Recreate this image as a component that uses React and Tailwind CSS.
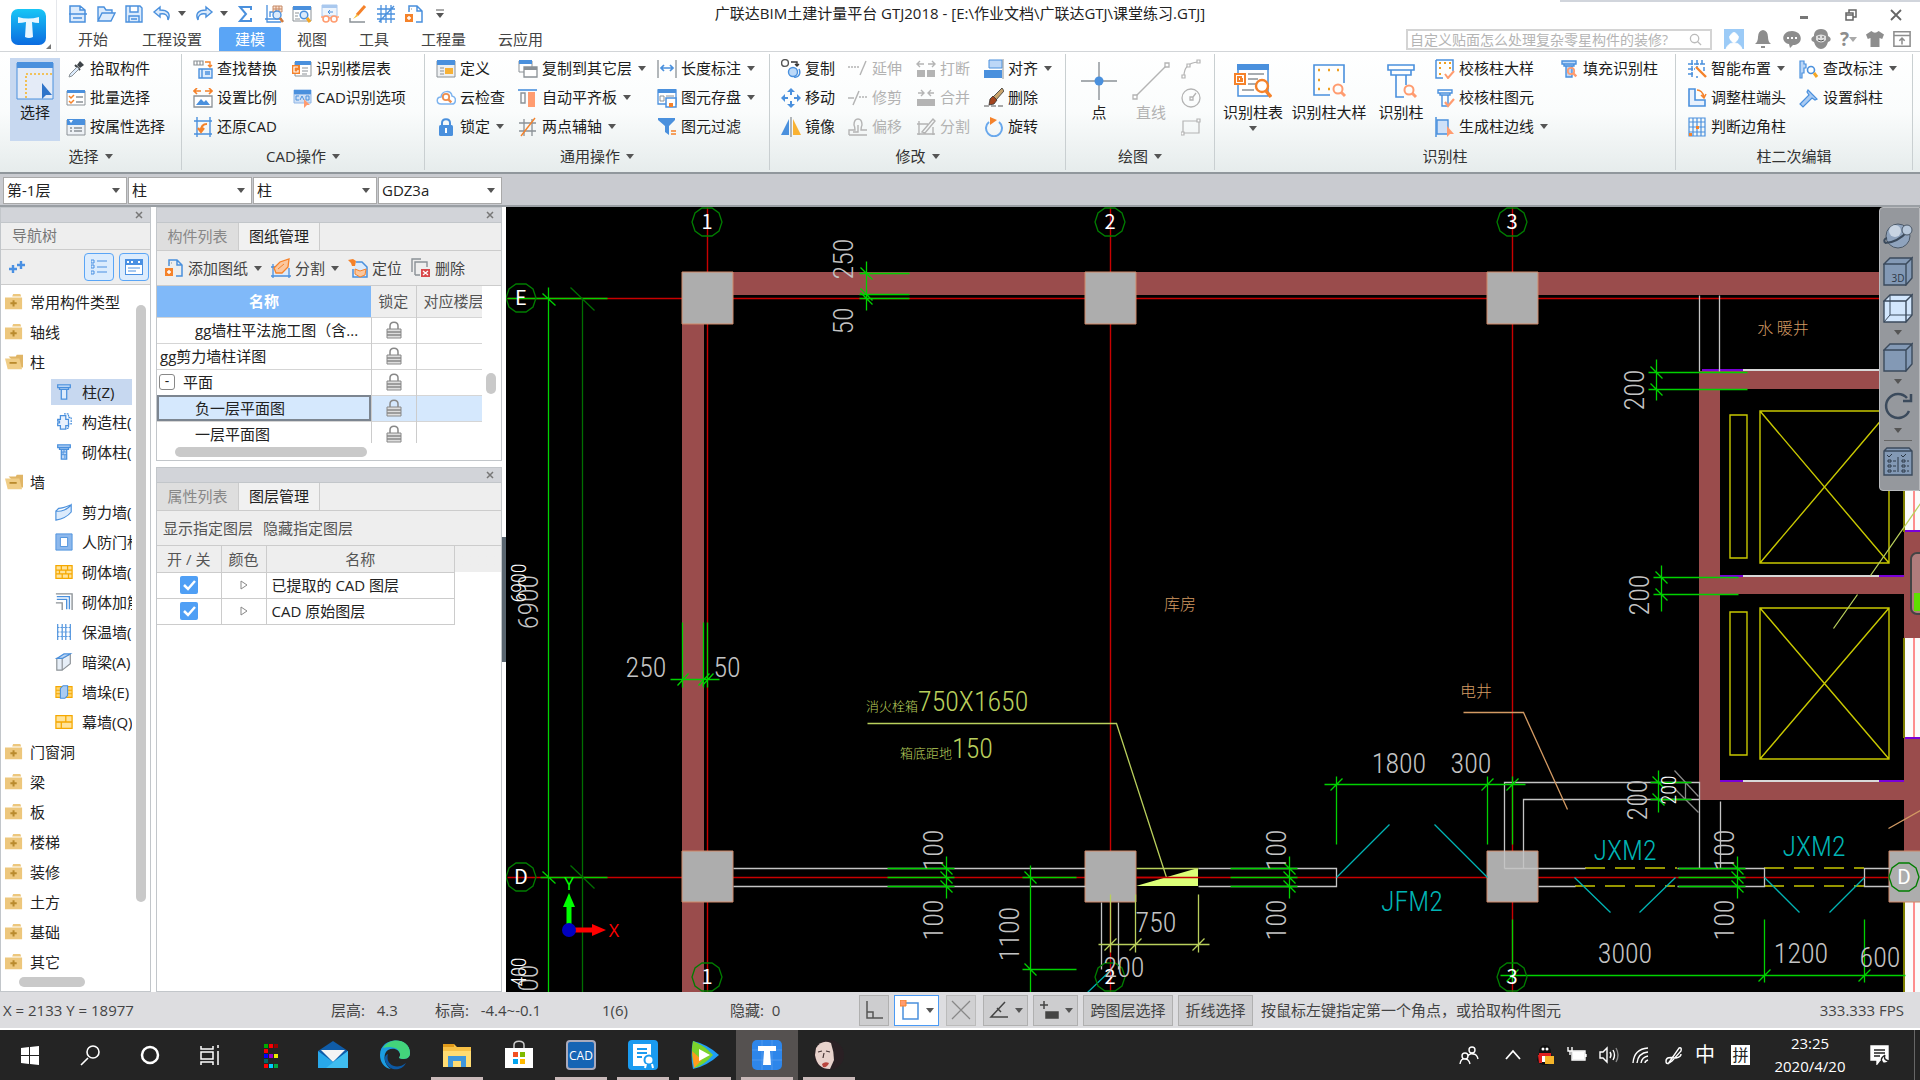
import React from 'react';

const B = '#4a90dd';
const O = '#f5822a';
const G = '#8b9196';
const L = '#b4b4b4';
const S = '#ff9c70';

/* ---------- icons, all on a 20x20 grid ---------- */

const columnShape = (c, fill) => (
  <path d="M3 2h14v3h-2v2h-2v11H7V7H5V5H3zM5 5h10M7 7h6" fill={fill || 'none'} stroke={c} strokeWidth="1.4" />
);
const lens = (x, y, c = S) => (
  <g fill="none" stroke={c} strokeWidth="1.8">
    <circle cx={x} cy={y} r="3.2" />
    <path d={`M${x + 2.3} ${y + 2.3}l3 3`} strokeWidth="2.4" />
  </g>
);

const icons = {
  newFile: <path d="M2 9V2h10l5 4v12H2zM12 2v4h5M1 10h18M5 14h9" fill="#dcebfc" stroke={B} strokeWidth="1.5" />,
  open: <path d="M2 17V3h6l2 3h6v3M2 17L6 9h13l-4 8z" fill="#dcebfc" stroke={B} strokeWidth="1.4" />,
  save: <path d="M2 2h14l2 2v14H2zM6 2v6h8V2M5 18v-6h10v6M7 15h6" fill="#dcebfc" stroke={B} strokeWidth="1.4" />,
  undo: <path d="M8 3L2 8l6 5v-3c5-1 8 1 8 6 3-6 0-10-8-10z" fill="#dcebfc" stroke={B} strokeWidth="1.4" />,
  redo: <path d="M12 3l6 5-6 5v-3c-5-1-8 1-8 6-3-6 0-10 8-10z" fill="#dcebfc" stroke={B} strokeWidth="1.4" />,
  sum: <path d="M15 6V3H4l6 7-6 7h11v-3" fill="none" stroke={B} strokeWidth="2" />,
  report: (
    <g fill="none">
      <path d="M3 1v17h14M6 13V8h4M1 15h17" stroke={B} strokeWidth="1.3" />
      <path d="M9 2h9v6H9zM12 2v6M15 2v6M9 5h9" fill="#fde2d0" stroke="#c68a67" />
      <circle cx="13" cy="11" r="4" fill="#dcebfc" stroke={B} strokeWidth="1.4" />
      <path d="M16 14l3 4" stroke="#d07a3d" strokeWidth="2.6" />
    </g>
  ),
  viewDoc: (
    <g fill="none">
      <path d="M1 3h18v14H1z" fill="#fff" stroke={G} />
      <path d="M1 2h18v4H1z" fill={B} />
      <path d="M3 9h4M3 12h3M3 15h5" stroke={G} />
      <circle cx="12" cy="11" r="3.8" fill="#dcebfc" stroke={B} strokeWidth="1.5" />
      <path d="M15 14l3 4" stroke="#f5a623" strokeWidth="3" />
    </g>
  ),
  cloudDoc: (
    <g fill="none">
      <path d="M2 1h15v11H2z" fill="#eef5fd" stroke="#a9c8ee" />
      <path d="M2 1h15v3H2z" fill="#a9c8ee" />
      <path d="M13 8H8m2-2L8 8l2 2" stroke={B} />
      <circle cx="6" cy="15" r="3" stroke={S} strokeWidth="1.6" />
      <circle cx="14" cy="15" r="3" stroke={S} strokeWidth="1.6" />
      <path d="M2 14v-2M18 14v-2M9 14h2" stroke={S} strokeWidth="1.4" />
    </g>
  ),
  brush: (
    <g fill="none">
      <path d="M17 2L9 11" stroke={O} strokeWidth="3" />
      <path d="M9 10l-4 5 5-3z" fill="#f5c23a" />
      <path d="M2 14v4h15" stroke={G} strokeWidth="1.4" />
    </g>
  ),
  gridTool: <path d="M5 1v18M10 1v18M15 1v18M1 5h18M1 10h18M1 15h18M3 18L18 2" fill="none" stroke={B} strokeWidth="1.3" />,
  addFile: (
    <g fill="none">
      <path d="M5 8V2h8l5 5v11h-6M13 2v5h5" stroke={B} strokeWidth="1.5" />
      <path d="M5 5h3" stroke={G} strokeDasharray="1 1" />
      <path d="M1 10h8v8H1z" fill={O} />
      <path d="M5 12v4M3 14h4" stroke="#fff" strokeWidth="1.4" />
    </g>
  ),
  dropper: (
    <g fill="none">
      <path d="M14 2l4 4-4 3-3-3z" fill="#3d4347" />
      <path d="M9 6l5 5" stroke="#3d4347" strokeWidth="2" />
      <path d="M11 8l-7 7-1 3 3-1 7-7z" fill="#dcebfc" stroke={G} />
    </g>
  ),
  batch: (
    <g fill="none">
      <path d="M1 3h18v14H1z" fill="#fff" stroke={G} />
      <path d="M1 2h18v3H1z" fill={B} />
      <path d="M3 8l2 2 3-3M3 13l2 2 3-3" stroke={O} strokeWidth="1.5" />
      <path d="M10 9h7M10 14h7" stroke={G} strokeWidth="1.4" />
    </g>
  ),
  byProp: (
    <g fill="none">
      <path d="M1 3h18v15H1z" fill="#eef2f6" stroke={G} />
      <path d="M1 2h18v6H1z" fill={B} />
      <path d="M3 3h4L5 6z" fill="#fff" />
      <path d="M4 11h2M4 14h2M8 11h8M8 14h8" stroke={G} strokeWidth="1.3" />
    </g>
  ),
  findReplace: (
    <g fill="none">
      <path d="M1 2h9v4H1zM4 2v4M7 2v4" stroke={G} strokeWidth="1.2" />
      <path d="M12 3h5v5m-2-2l2 2 2-2" stroke={O} strokeWidth="1.4" />
      <path d="M6 10h13v9H6zM9 10v9M12 13h5M12 15h5" fill="#dcebfc" stroke={B} strokeWidth="1.4" />
    </g>
  ),
  scale: (
    <g fill="none">
      <path d="M1 3h7M12 3h7M4 0L1 3l3 3M16 0l3 3-3 3" stroke={O} strokeWidth="1.6" />
      <path d="M1 8h18v11H1z" fill="#fff" stroke={G} strokeWidth="1.3" />
      <path d="M3 17l5-6 3 3 2-2 4 5z" fill={B} />
    </g>
  ),
  restore: (
    <g fill="none">
      <path d="M4 0v20M1 4h18M17 0v20M1 17h18" stroke={B} strokeWidth="1.4" />
      <path d="M14 7c-5 0-6 3-6 7m-3-3l3 4 3-4" stroke={O} strokeWidth="2.2" />
    </g>
  ),
  floorTable: (
    <g fill="none">
      <path d="M3 3h16v14H3z" fill="#fff" stroke={G} />
      <path d="M3 2h16v4H3z" fill={B} />
      <path d="M10 9h6M10 12h6M10 15h5" stroke={G} />
      <path d="M0 6h8v9H0z" fill={O} />
      <path d="M6 8H2v5h4v-2" stroke="#fff" strokeWidth="1.2" />
    </g>
  ),
  cadOption: (
    <g fill="none">
      <path d="M2 2h17v4H2zM2 6h17v9H2z" fill="#cfe0f5" stroke="#8fb6e6" />
      <path d="M2 2h17v4H2z" fill={B} />
      <path d="M7 8H4v4h3M8 12l2-4 2 4M14 8v4h3V8z" stroke={B} />
      <path d="M12 11l6 6-3 0-3 3z" fill={S} />
    </g>
  ),
  define: (
    <g fill="none">
      <path d="M1 2h18v16H1z" fill="#eef0f2" stroke={G} />
      <path d="M1 1h18v5H1z" fill={B} />
      <path d="M4 9h4M4 12h4M4 15h4" stroke={G} />
      <path d="M9 9h8v6H9z" fill="#f7b136" />
    </g>
  ),
  cloud: (
    <g fill="none">
      <path d="M5 16C0 16 0 9 5 9c1-7 10-7 11-1 5 1 4 8 0 8z" fill="#fff" stroke="#7db3ee" strokeWidth="1.5" />
      {lens(10, 9, '#ef8e4d')}
    </g>
  ),
  lock: (
    <g fill="none">
      <path d="M6 9V6c0-5 8-5 8 0v3" stroke={B} strokeWidth="2" />
      <rect x="3" y="8" width="14" height="11" rx="1.5" fill={B} />
      <path d="M10 11v5" stroke="#fff" strokeWidth="2" />
    </g>
  ),
  copyLayer: (
    <g fill="none">
      <path d="M1 2h13v11H1z" fill="#fff" stroke={G} />
      <path d="M1 1h13v4H1z" fill={B} />
      <path d="M6 8h13v10H6z" fill="#fff" stroke={G} strokeWidth="1.3" />
      <path d="M6 8h13v3H6z" fill={G} />
    </g>
  ),
  alignBoard: (
    <g fill="none">
      <path d="M0 2h19" stroke={B} strokeWidth="1.6" />
      <path d="M3 5h4v10H3z" stroke={G} strokeWidth="1.4" />
      <path d="M10 4h7v15h-7z" fill={S} />
    </g>
  ),
  auxAxis: (
    <g fill="none">
      <path d="M6 2v17M14 2v17M1 6h17M1 14h17" stroke={G} strokeWidth="1.3" />
      <path d="M3 19L17 1" stroke={O} strokeWidth="1.4" />
    </g>
  ),
  lengthDim: (
    <g fill="none">
      <path d="M1 1v18M19 1v18" stroke={G} strokeWidth="1.3" />
      <path d="M4 9h12M7 6L4 9l3 3M13 6l3 3-3 3" stroke={B} strokeWidth="1.7" />
    </g>
  ),
  saveElem: (
    <g fill="none">
      <path d="M1 2h18v14H1z" fill="#fff" stroke={B} strokeWidth="1.3" />
      <path d="M1 1h18v4H1z" fill={B} />
      <path d="M3 8h4v5H3zM9 8h8" stroke={G} />
      <path d="M9 10h10v9H9z" fill="#fff" stroke={B} strokeWidth="1.5" />
      <path d="M12 15h4v4h-4z" fill={O} />
    </g>
  ),
  filter: (
    <g fill="none">
      <path d="M1 1h17v2l-6 6v9l-4-3V9L1 3z" fill={B} />
      <path d="M14 14h5M14 17h5" stroke={O} strokeWidth="1.6" />
    </g>
  ),
  copy: (
    <g fill="none">
      <circle cx="4" cy="4" r="3.4" stroke="#555" strokeWidth="1.4" />
      <path d="M10 3h6v4m-2-2l2 2 2-2" stroke="#333" strokeWidth="1.4" />
      <circle cx="12" cy="13" r="4.5" fill="#bcd9f8" stroke={B} strokeWidth="1.4" />
      <path d="M13 18c5 1 7-4 5-8" stroke={B} strokeWidth="1.5" />
    </g>
  ),
  move: (
    <g fill={B}>
      <path d="M10 0l4 4h-3v3H9V4H6zM10 20l4-4h-3v-3H9v3H6zM0 10l4-4v3h3v2H4v3zM20 10l-4-4v3h-3v2h3v3z" />
    </g>
  ),
  mirror: (
    <g>
      <path d="M8 2v16H0z" fill={B} />
      <path d="M12 2v16h8z" fill="#f9b233" />
      <path d="M10 0v20" stroke={G} strokeWidth="1.3" />
    </g>
  ),
  extend: (
    <g fill="none" stroke={L} strokeWidth="1.4">
      <path d="M0 8h11" strokeDasharray="2 1" />
      <path d="M12 16l6-14" />
    </g>
  ),
  trim: (
    <g fill="none" stroke={L} strokeWidth="1.5">
      <path d="M0 10h6M5 17l6-14" />
      <path d="M11 9h9" strokeDasharray="2 1" />
    </g>
  ),
  offset: (
    <g fill="none" stroke={L} strokeWidth="1.4">
      <path d="M1 18v-5h6q0-3-1-5 0-6 4-6t4 6q-1 2-1 5h6" />
      <path d="M1 18h18M5 15h5V8" />
    </g>
  ),
  breakIt: (
    <g fill={L}>
      <path d="M1 11h8v7H1zM11 11h8v7h-8z" />
      <path d="M2 5h6M4 2L1 5l3 3M12 5h6M16 2l3 3-3 3" fill="none" stroke={L} strokeWidth="1.4" />
    </g>
  ),
  merge: (
    <g fill={L}>
      <path d="M1 11h18v7H1z" />
      <path d="M2 5h6M5 2l3 3-3 3M18 5h-6M15 2l-3 3 3 3" fill="none" stroke={L} strokeWidth="1.4" />
    </g>
  ),
  split: <path d="M3 4v14M1 7h11M17 10v8M1 17h18M6 15L17 2l2 2L9 16z" fill="none" stroke={L} strokeWidth="1.4" />,
  align: (
    <g>
      <path d="M5 1h13v8H5z" fill="#bcd7f7" stroke={B} />
      <path d="M0 11h18v8H0z" fill={B} />
      <path d="M19 0v20" stroke={G} />
    </g>
  ),
  erase: (
    <g fill="none">
      <path d="M0 18h19" stroke="#555" strokeDasharray="5 2" />
      <path d="M18 0L9 9l3 3 8-9z" fill="#c9a36b" stroke="#333" strokeWidth=".8" />
      <path d="M9 8l4 4-3 4-5 1 1-6z" fill="#a3431c" stroke="#333" strokeWidth=".8" />
    </g>
  ),
  rotate: (
    <g fill="none">
      <path d="M5 5a8 8 0 1 0 10 0" stroke="#69a8ec" strokeWidth="2" />
      <path d="M6 0l7 3-7 5z" fill={O} />
    </g>
  ),
  arc: (
    <g fill="#fff" stroke={L} strokeWidth="1.2">
      <path d="M3 17Q3 4 17 3" fill="none" />
      <path d="M1 16h3v3H1zM6 5h3v3H6zM16 1h3v3h-3z" />
    </g>
  ),
  circle: (
    <g fill="none" stroke={L} strokeWidth="1.3">
      <circle cx="10" cy="10" r="9" />
      <path d="M9 9h3v3H9zM12 9l3-4" />
    </g>
  ),
  rect: (
    <g fill="#fff" stroke={L} strokeWidth="1.2">
      <path d="M2 4h16v12H2z" fill="none" />
      <path d="M0 15h3v3H0zM16 2h3v3h-3z" />
    </g>
  ),
  checkSample: (
    <g fill="none">
      <path d="M1 1h17v11M1 1v18h7" stroke={B} strokeWidth="1.5" />
      <path d="M4 4h2M9 4h2M14 4h2M4 9h2M4 15h2M14 9h2" stroke="#f0a020" strokeWidth="2" />
      <path d="M10 15l3 4 6-7" stroke={S} strokeWidth="2" />
    </g>
  ),
  checkElem: (
    <g fill="none">
      {columnShape(B)}
      <path d="M10 14l3 4 6-7" stroke={S} strokeWidth="2.2" />
    </g>
  ),
  edge: (
    <g fill="none">
      <path d="M2 3h11v14H2z" fill="#cfe1f8" stroke={B} strokeWidth="1.4" />
      <path d="M1 0v20" stroke={B} strokeWidth="1.5" />
      <path d="M12 9l7 8h-4l-3 3z" fill={S} />
    </g>
  ),
  fillCol: (
    <g>
      {columnShape(B, '#bcd7f7')}
      {lens(12, 12)}
    </g>
  ),
  smart: (
    <g fill="none">
      <path d="M5 1v18M10 1v7M15 1v4M1 5h18M1 10h7M1 15h5M17 8v4M10 17v2" stroke={B} strokeWidth="1.5" strokeDasharray="5 1" />
      <path d="M9 8l10 10" stroke={O} strokeWidth="2.4" />
    </g>
  ),
  adjust: (
    <g fill="none">
      <path d="M2 1h6v11h10v6H2z" fill="#e8f1fd" stroke={B} strokeWidth="1.6" />
      <path d="M10 2c4 0 6 3 7 7m-3-2l3 3 2-4" stroke={O} strokeWidth="1.5" />
    </g>
  ),
  corner: (
    <g fill="none">
      <path d="M2 1h16v18H2zM6 1v18M10 1v18M14 1v18M2 5h16M2 10h16M2 15h16" stroke={B} strokeWidth="1.2" />
      <path d="M2 16h3v3H2zM9 9h3v3H9z" fill={O} />
    </g>
  ),
  editDim: (
    <g fill="none">
      <path d="M1 2h4v3h2v4H5v5H3v5H1z" fill="#bcd7f7" stroke={B} strokeWidth="1.2" />
      <circle cx="12" cy="11" r="3.5" stroke={B} strokeWidth="1.6" />
      <path d="M15 14l3 4" stroke="#f5a623" strokeWidth="3" />
    </g>
  ),
  slant: <path d="M9 2l9 9-2 1-3-2-9 9-3-3 9-9-2-3z" fill="#a9cbf3" stroke={B} strokeWidth="1.2" />,
  splitSheet: (
    <g fill="none">
      <path d="M2 8h16v10H2z" fill="#dcebfc" />
      <path d="M2 6v14M18 10v10M0 18h20M0 9h5" stroke={B} strokeWidth="1.3" />
      <path d="M3 10l6-6 9-3-1 8-6 6-6 0z" fill="#fbc79e" stroke={O} strokeWidth="1.3" />
      <path d="M7 11l6-5" stroke={O} />
    </g>
  ),
  locate: (
    <g fill="none">
      <path d="M8 4h6l5 5v10H5v-8" fill="#dcebfc" stroke={B} strokeWidth="1.5" />
      <path d="M0 2l5-1 3 2-1 5-3 0-1-3z" fill={O} />
      <path d="M7 11l5 2 6-2-1 6-5 2-5-3z" fill="#fbc79e" stroke={O} />
    </g>
  ),
  removeSheet: (
    <g fill="none">
      <path d="M1 14V1h9M4 17V4h12v5M4 17h5" stroke={G} strokeWidth="1.4" />
      <path d="M10 11h9v8h-9z" fill="#d9484b" />
      <path d="M12 13l5 4M17 13l-5 4" stroke="#fff" strokeWidth="1.3" />
    </g>
  ),
  folder: (
    <g>
      <path d="M9 1h8l1 3H8zM0 5h19v13H0z" fill="#edc77d" />
      <path d="M9.5 8v7M6 11.5h7" stroke="#b98a2d" strokeWidth="2.2" />
    </g>
  ),
  folderOpen: (
    <g>
      <path d="M4 4h8l1-2h7v14h-4z" fill="#e0b566" />
      <path d="M0 6h16l3 12H3z" fill="#f0cd86" />
      <path d="M5 11h8" stroke="#b98a2d" strokeWidth="2" />
    </g>
  ),
  column: columnShape(B, '#dcebfc'),
  structCol: (
    <g stroke={B} strokeWidth="1.4">
      <path d="M10 1h5v4h3v7h-3v5h-4" fill="none" strokeDasharray="2 1" />
      <path d="M6 3h6v4h3v7h-3v4H6v-4H3v-3h2V9H3V7h3z" fill="#e8f1fd" />
    </g>
  ),
  brickCol: (
    <g>
      {columnShape(B, '#bcd7f7')}
      <path d="M7 10h6M7 13h6M10 7v3M9 10v3M11 13v4" stroke={B} />
    </g>
  ),
  shearWall: <path d="M1 9c6 1 13-2 17-7v8c-4 5-11 8-17 9zM1 9l3-3c5 0 9-2 14-4" fill="#dcebfc" stroke={B} strokeWidth="1.3" />,
  airDoor: (
    <g>
      <path d="M1 1h18v18H1z" fill="#8db8ec" stroke={B} />
      <path d="M6 5h8v10H6z" fill="#fff" stroke={B} />
    </g>
  ),
  brickWall: <path d="M1 3h18v14H1zM1 8h18M1 12h18M7 3v5M14 3v5M5 8v4M12 8v4M8 12v5M15 12v5" fill="#ffe39a" stroke="#f5a800" strokeWidth="1.4" />,
  brickBar: (
    <g fill="none" strokeWidth="1.5">
      <path d="M1 1h18v18M1 11h7v8" stroke={G} />
      <path d="M2 4h14v14M2 7h11v11" stroke={B} />
    </g>
  ),
  insulWall: (
    <g fill="none" stroke={B}>
      <path d="M3 1v18M17 1v18M8 1v18M12 1v18" strokeWidth="1.3" />
      <path d="M3 5h14M3 10h14M3 15h14" strokeDasharray="2 1" />
    </g>
  ),
  hiddenBeam: (
    <g fill="#e6eef7" stroke={G} strokeWidth="1.3">
      <path d="M2 6h6v13H2zM8 6l9-5v11l-9 7" />
      <path d="M2 6l8-5h7L8 6z" fill="#bcd7f7" stroke={B} />
    </g>
  ),
  pier: (
    <g>
      <path d="M1 4h18v12H1zM1 8h18M1 12h18" fill="#ffd56e" stroke="#f5a800" strokeWidth="1.2" />
      <path d="M6 6l3-3h5v11l-3 3H6z" fill="#a9cbf3" stroke={B} strokeWidth="1.2" />
    </g>
  ),
  curtain: <path d="M1 3h18v14H1zM12 3v7M1 10h18M7 10v7" fill="#ffe39a" stroke="#f5a800" strokeWidth="1.4" />,
};

function Icon({ name, className = 'w-5 h-5' }) {
  return (
    <svg viewBox="0 0 20 20" className={`${className} shrink-0`} aria-hidden="true">
      {icons[name]}
    </svg>
  );
}

function Caret({ className = '' }) {
  return (
    <svg viewBox="0 0 8 5" className={`w-2 h-[5px] shrink-0 ${className}`} aria-hidden="true">
      <path d="M0 0h8L4 5z" fill="#555" />
    </svg>
  );
}

/* ---------- title bar, tabs ---------- */

const quick = ['newFile', 'open', 'save', 'undo', 'redo', 'sum', 'report', 'viewDoc', 'cloudDoc', 'brush', 'gridTool', 'addFile'];

function TitleBar() {
  return (
    <header className="flex bg-white h-[51px] shrink-0">
      <button aria-label="菜单" className="w-[57px] shrink-0 flex items-end pl-[11px] pb-1.5 border-r border-gray-200">
        <svg viewBox="0 0 35 36" className="w-[35px] h-9">
          <defs>
            <linearGradient id="logo" x1="0" y1="0" x2="0" y2="1">
              <stop offset="0" stopColor="#18c6f6" />
              <stop offset="1" stopColor="#0b6be0" />
            </linearGradient>
          </defs>
          <rect width="35" height="36" rx="7" fill="url(#logo)" />
          <path d="M7 8q10 3 21 0v6q-4 0-7-1l1 15q-4 2-8 0l1-15q-4 1-8 1z" fill="#e9f7ff" />
        </svg>
        <svg viewBox="0 0 5 5" className="w-[5px] h-[5px] -mb-1">
          <path d="M5 0v5H0z" fill="#777" />
        </svg>
      </button>
      <div className="flex-1 min-w-0 flex flex-col">
        <div className="flex items-center justify-between h-[27px]">
          <div className="flex items-center gap-2 pl-[11px]">
            {quick.map((n) => (
              <button key={n} aria-label={n} className="flex items-center gap-1.5">
                <Icon name={n} />
                {(n === 'undo' || n === 'redo') && <Caret />}
              </button>
            ))}
            <svg viewBox="0 0 8 9" className="w-2 h-[9px] ml-1">
              <path d="M0 1h8" stroke="#555" />
              <path d="M0 4h8L4 9z" fill="#555" />
            </svg>
          </div>
          <h1 className="text-[15px] whitespace-nowrap mr-[84px]">广联达BIM土建计量平台 GTJ2018 - [E:\作业文档\广联达GTJ\课堂练习.GTJ]</h1>
          <div className="w-[360px] h-full border-t-2 border-gray-300 flex items-center justify-end gap-[33px] pr-[18px] text-[#666]">
            <button aria-label="最小化" className="w-3 h-3 flex items-end pb-0.5">
              <span className="w-2 h-[3px] bg-[#777]" />
            </button>
            <button aria-label="还原">
              <svg viewBox="0 0 12 12" className="w-3 h-3" fill="none" stroke="#666" strokeWidth="1.5">
                <path d="M1 4h7v7H1zM4 4V1h7v7H8M1 6h7" />
              </svg>
            </button>
            <button aria-label="关闭">
              <svg viewBox="0 0 12 12" className="w-3 h-3" stroke="#666" strokeWidth="1.8">
                <path d="M1 1l10 10M11 1L1 11" />
              </svg>
            </button>
          </div>
        </div>
        <div className="flex justify-between h-6">
          <nav className="flex pl-1 text-[15px] text-[#444] leading-6">
            {['开始', '工程设置'].map((t) => (
              <button key={t} className="px-[17px]">{t}</button>
            ))}
            <button className="w-[62px] bg-[#5aa5f6] text-white rounded-t-[2px]">建模</button>
            {['视图', '工具', '工程量', '云应用'].map((t) => (
              <button key={t} className="px-4">{t}</button>
            ))}
          </nav>
          <div className="flex items-center gap-[9px] pr-[9px]">
            <label className="flex items-center w-[306px] h-[21px] border-2 border-[#d4d4d4] pr-2 mr-[3px]">
              <input aria-label="搜索" placeholder="自定义贴面怎么处理复杂零星构件的装修?" className="flex-1 min-w-0 pl-0.5 text-[14px] outline-none placeholder:text-[#b4b4b4]" />
              <svg viewBox="0 0 14 14" className="w-[13px] h-[13px]" fill="none" stroke="#bbb" strokeWidth="1.4">
                <circle cx="6" cy="6" r="4.5" />
                <path d="M9 9l4 4" />
              </svg>
            </label>
            <svg viewBox="0 0 20 20" className="w-5 h-5">
              <path d="M0 0h20v20H0z" fill="#9ccbf7" />
              <path d="M5 8h10M6 7q4-7 8 0v3q-4 7-8 0zM2 20q2-6 8-6t8 6z" fill="#fff" stroke="#fff" />
            </svg>
            <svg viewBox="0 0 20 20" className="w-5 h-5 fill-[#8d8d8d]">
              <path d="M10 1q5 1 5 7 0 5 3 7H2q3-2 3-7 0-6 5-7M8 17h4v2H8z" />
            </svg>
            <svg viewBox="0 0 20 20" className="w-5 h-5 fill-[#8d8d8d]">
              <path d="M10 2c11 0 12 14 1 14l-3 3-1-4C-2 13 0 2 10 2" />
              <path d="M5 9h2M9 9h2M13 9h2" stroke="#fff" strokeWidth="2" />
            </svg>
            <svg viewBox="0 0 20 20" className="w-5 h-5 fill-[#8d8d8d]">
              <path d="M10 0c6 0 7 4 7 7 4 2 3 5 0 6q-2 7-7 7t-7-7C0 12-1 9 3 7c0-3 1-7 7-7" />
              <path d="M5 7q5-3 10 0v4q-5 5-10 0z" fill="#ddd" />
              <path d="M7 8h2M11 8h2M7 11q3 2 6 0" stroke="#555" fill="none" />
            </svg>
            <span className="flex items-center text-[19px] font-bold leading-5 text-[#8d8d8d]">?<Caret className="opacity-50" /></span>
            <svg viewBox="0 0 20 20" className="w-[18px] h-5 fill-[#8d8d8d]">
              <path d="M6 1q4 4 8 0l6 4-2 5-3-1v10H5V9l-3 1-2-5z" />
            </svg>
            <svg viewBox="0 0 20 20" className="w-[18px] h-5" fill="none" stroke="#8d8d8d" strokeWidth="1.7">
              <path d="M1 2h18v16H1zM1 6h18M10 16V9M7 12l3-3 3 3" />
            </svg>
          </div>
        </div>
      </div>
    </header>
  );
}

/* ---------- ribbon ---------- */

function Item({ icon, text, off, caret }) {
  return (
    <button className={`flex items-center h-[29px] gap-1 text-[15px] whitespace-nowrap ${off ? 'text-[#b2b2b2]' : 'text-[#1c1c1c]'}`}>
      <Icon name={icon} />
      {text}
      {caret && <Caret className="ml-0.5" />}
    </button>
  );
}

function Col({ className = '', items }) {
  return (
    <div className={`flex flex-col shrink-0 ${className}`}>
      {items.map((it) => (
        <Item key={it[1]} icon={it[0]} text={it[1]} caret={it[2] === 'v'} off={it[2] === 'off'} />
      ))}
    </div>
  );
}

function Group({ className, pad = '', label, caret = true, children }) {
  return (
    <section className={`flex flex-col shrink-0 border-r border-[#c9cfd1] my-0.5 ${className}`}>
      <div className={`flex h-[89px] ${pad}`}>{children}</div>
      <h2 className="flex-1 flex items-center justify-center gap-1.5 text-[15px] text-[#333]">
        {label}
        {caret && <Caret />}
      </h2>
    </section>
  );
}

function Big({ className, text, off, caret, children }) {
  return (
    <button className={`flex flex-col items-center h-[83px] mt-1 pt-1 shrink-0 text-[15px] leading-5 ${off ? 'text-[#b2b2b2]' : 'text-[#1c1c1c]'} ${className}`}>
      <svg viewBox="0 0 38 38" className="w-[38px] h-[38px] mb-0.5">{children}</svg>
      <span className="whitespace-nowrap">{text}</span>
      {caret && <Caret className="mt-1" />}
    </button>
  );
}

function Ribbon() {
  return (
    <div className="flex h-[123px] shrink-0 overflow-hidden border-t border-b-2 border-t-[#d2d5d8] border-b-[#90979c] bg-linear-to-b from-white via-[#fafcfc] to-[#e6ecec]">
      <Group className="w-[182px]" label="选择">
        <Big className="w-[50px] ml-2.5 mr-1.5 bg-[#c7d8f0]" text="选择">
          <path d="M1 1h36v36H1z" fill="#e4ebf7" stroke={B} />
          <path d="M1 0h36v6H1z" fill={B} />
          <path d="M36 12H10v25" fill="none" stroke="#f5b52a" strokeWidth="1.6" strokeDasharray="2 2" />
          <path d="M26 21l10 12h-6l-4 4z" fill="#2f74c9" />
        </Big>
        <Col items={[['dropper', '拾取构件'], ['batch', '批量选择'], ['byProp', '按属性选择']]} />
      </Group>
      <Group className="w-[243px]" pad="pl-[11px]" label="CAD操作">
        <Col className="w-[99px]" items={[['findReplace', '查找替换'], ['scale', '设置比例'], ['restore', '还原CAD']]} />
        <Col items={[['floorTable', '识别楼层表'], ['cadOption', 'CAD识别选项']]} />
      </Group>
      <Group className="w-[345px]" pad="pl-[11px]" label="通用操作">
        <Col className="w-[82px]" items={[['define', '定义'], ['cloud', '云检查'], ['lock', '锁定', 'v']]} />
        <Col className="w-[139px]" items={[['copyLayer', '复制到其它层', 'v'], ['alignBoard', '自动平齐板', 'v'], ['auxAxis', '两点辅轴', 'v']]} />
        <Col items={[['lengthDim', '长度标注', 'v'], ['saveElem', '图元存盘', 'v'], ['filter', '图元过滤']]} />
      </Group>
      <Group className="w-[296px]" pad="pl-[11px]" label="修改">
        <Col className="w-[67px]" items={[['copy', '复制'], ['move', '移动'], ['mirror', '镜像']]} />
        <Col className="w-[68px]" items={[['extend', '延伸', 'off'], ['trim', '修剪', 'off'], ['offset', '偏移', 'off']]} />
        <Col className="w-[68px]" items={[['breakIt', '打断', 'off'], ['merge', '合并', 'off'], ['split', '分割', 'off']]} />
        <Col items={[['align', '对齐', 'v'], ['erase', '删除'], ['rotate', '旋转']]} />
      </Group>
      <Group className="w-[149px]" label="绘图">
        <Big className="w-[58px] ml-1" text="点">
          <path d="M19 0v38M1 19h36" stroke={G} strokeWidth="1.4" />
          <circle cx="19" cy="19" r="4.5" fill={B} />
        </Big>
        <Big className="w-[46px]" text="直线" off>
          <path d="M3 35L35 3" stroke={L} strokeWidth="1.4" />
          <path d="M1 33h4v4H1zM33 1h4v4h-4z" fill="#fff" stroke={L} strokeWidth="1.3" />
        </Big>
        <div className="flex flex-col items-center w-[34px]">
          {['arc', 'circle', 'rect'].map((n) => (
            <button key={n} aria-label={n} className="flex items-center h-[29px]"><Icon name={n} /></button>
          ))}
        </div>
      </Group>
      <Group className="w-[461px]" pad="pl-1.5" label="识别柱" caret={false}>
        <Big className="w-16" text="识别柱表" caret>
          <path d="M4 4h30v30H4z" fill="#fff" stroke={B} strokeWidth="1.5" />
          <path d="M3 2h32v6H3z" fill={B} />
          <path d="M14 12h16M14 17h10M14 22h8M8 28h12" stroke={G} strokeWidth="1.5" />
          <path d="M1 12h10v10H1zM8 15H4v4h4v-2H6" fill="#fff" stroke={O} strokeWidth="2" />
          <circle cx="28" cy="24" r="6" fill="#fff" stroke={O} strokeWidth="2.4" />
          <path d="M32 29l5 6" stroke={O} strokeWidth="3.5" />
        </Big>
        <Big className="w-[88px]" text="识别柱大样">
          <path d="M34 21V3H4v30h16" fill="none" stroke={B} strokeWidth="1.6" />
          <path d="M8 8h2M18 8h2M27 8h2M8 18h2M8 27h2M18 27h2" stroke="#f0a020" strokeWidth="2.5" />
          <circle cx="28" cy="27" r="4.5" fill="none" stroke={S} strokeWidth="2" />
          <path d="M31 30l4 4" stroke={S} strokeWidth="3" />
        </Big>
        <Big className="w-14" text="识别柱">
          <path d="M22 35h-8V13H9V8H6V3h26v5h-3v5h-5v10M6 8h26M9 13h20" fill="none" stroke={B} strokeWidth="1.6" />
          <circle cx="27" cy="28" r="4.5" fill="none" stroke={S} strokeWidth="2" />
          <path d="M30 31l4 4" stroke={S} strokeWidth="3" />
        </Big>
        <Col className="w-[124px] ml-1.5" items={[['checkSample', '校核柱大样'], ['checkElem', '校核柱图元'], ['edge', '生成柱边线', 'v']]} />
        <Col items={[['fillCol', '填充识别柱']]} />
      </Group>
      <Group className="w-[237px]" pad="pl-[11px]" label="柱二次编辑" caret={false}>
        <Col className="w-[112px]" items={[['smart', '智能布置', 'v'], ['adjust', '调整柱端头'], ['corner', '判断边角柱']]} />
        <Col items={[['editDim', '查改标注', 'v'], ['slant', '设置斜柱']]} />
      </Group>
    </div>
  );
}

function ComboBar() {
  return (
    <div className="flex items-end gap-px h-[33px] pl-[3px] pb-px shrink-0 bg-[#c9cbd0] border-b-2 border-[#9a9fa4]">
      {[['楼层', '第-1层'], ['构件大类', '柱'], ['构件类型', '柱'], ['构件', 'GDZ3a']].map(([label, v]) => (
        <label key={label} className="grid items-center w-[124px] h-[27px] bg-white border border-[#a9a9a9]">
          <select aria-label={label} className="col-start-1 row-start-1 appearance-none w-full h-full px-[3px] text-[15px] outline-none">
            <option>{v}</option>
          </select>
          <Caret className="col-start-1 row-start-1 justify-self-end mr-1.5 pointer-events-none" />
        </label>
      ))}
    </div>
  );
}

/* ---------- docked panels ---------- */

function PanelCap() {
  return (
    <div className="flex justify-end items-center h-[15px] pr-[7px] shrink-0 bg-[#d2d4d9] border-b border-[#c2c6ca]">
      <button aria-label="关闭面板">
        <svg viewBox="0 0 8 8" className="w-2 h-2" stroke="#777" strokeWidth="1.5">
          <path d="M1 1l6 6M7 1L1 7" />
        </svg>
      </button>
    </div>
  );
}

const tree = [
  ['folder', '常用构件类型'],
  ['folder', '轴线'],
  ['folderOpen', '柱'],
  ['column', '柱(Z)', 1],
  ['structCol', '构造柱(', 1],
  ['brickCol', '砌体柱(', 1],
  ['folderOpen', '墙'],
  ['shearWall', '剪力墙(', 1],
  ['airDoor', '人防门框', 1],
  ['brickWall', '砌体墙(', 1],
  ['brickBar', '砌体加筋', 1],
  ['insulWall', '保温墙(', 1],
  ['hiddenBeam', '暗梁(A)', 1],
  ['pier', '墙垛(E)', 1],
  ['curtain', '幕墙(Q)', 1],
  ['folder', '门窗洞'],
  ['folder', '梁'],
  ['folder', '板'],
  ['folder', '楼梯'],
  ['folder', '装修'],
  ['folder', '土方'],
  ['folder', '基础'],
  ['folder', '其它'],
];

function NavTree() {
  return (
    <aside className="flex flex-col w-[151px] shrink-0 bg-white border border-[#c2c6ca]">
      <PanelCap />
      <h2 className="h-[27px] pl-[11px] text-[15px] leading-[25px] text-[#777] bg-[#eee] border-b border-[#ccc]">导航树</h2>
      <div className="flex items-center h-[35px] pl-2 pr-px bg-[#eee] border-b border-[#ccc]">
        <svg viewBox="0 0 16 14" className="w-4 h-[14px] mr-auto" stroke="#4a90e2" strokeWidth="2.4">
          <path d="M4 5v8M0 9h8M12 1v8M8 5h8" />
        </svg>
        <button aria-label="列表" className="flex items-center justify-center w-[30px] h-7 mr-[5px] rounded border border-[#5aa5f6] bg-[#dcecfd]">
          <svg viewBox="0 0 16 16" className="w-4 h-4" fill="none" stroke="#4a90e2">
            <path d="M0 1h3v3H0zM0 6h3v3H0zM0 12h3v3H0zM6 2h10M6 8h10M6 13h10" />
          </svg>
        </button>
        <button aria-label="窗口" className="flex items-center justify-center w-[30px] h-7 rounded border border-[#5aa5f6] bg-[#dcecfd]">
          <svg viewBox="0 0 18 16" className="w-[18px] h-4" fill="none">
            <path d="M0 0h18v16H0z" fill="#4a90e2" />
            <path d="M1 6h16v9H1z" fill="#fff" />
            <path d="M3 9h12M3 12h8" stroke="#4a90e2" />
            <path d="M2 3h2M6 3h2M13 3h2" stroke="#fff" strokeWidth="2" />
          </svg>
        </button>
      </div>
      <div className="flex flex-1 min-h-0">
        <ul className="w-[131px] pt-0.5 overflow-hidden text-[15px] text-[#222]">
          {tree.map(([icon, text, child]) => (
            <li key={text} className={`flex items-center h-[30px] whitespace-nowrap ${child ? 'pl-[50px]' : 'pl-1'}`}>
              <button className={`flex items-center h-[26px] ${child ? 'pl-1 gap-[9px]' : 'gap-[7px]'} ${text === '柱(Z)' ? 'bg-[#c7d8f0] w-[81px] shrink-0' : ''}`}>
                <Icon name={icon} className={child ? 'w-[18px] h-5' : 'w-[18px] h-[18px]'} />
                {text}
              </button>
            </li>
          ))}
        </ul>
        <div className="w-2.5 ml-1 mt-5 h-[597px] rounded-full bg-[#c9c9c9]" />
      </div>
      <div className="w-[66px] h-2.5 ml-[18px] mb-1 rounded-full bg-[#c9c9c9]" />
    </aside>
  );
}

function Tabs({ off, on }) {
  return (
    <div className="flex h-7 shrink-0 bg-[#eee] border-b border-[#ccc] text-[15px]">
      <button className="w-[82px] bg-[#dedede] text-[#888] border-r border-[#ccc]">{off}</button>
      <button className="w-[81px] text-[#222] border-r border-[#ccc] bg-[#f1f1f1]">{on}</button>
    </div>
  );
}

function PadLock() {
  return (
    <svg viewBox="0 0 16 18" className="w-4 h-[18px] mx-auto" aria-hidden="true">
      <path d="M4 8V5c0-5 8-5 8 0v3" fill="none" stroke="#888" strokeWidth="1.5" />
      <path d="M1 8h14v9H1z" fill="#ddd" stroke="#888" />
      <path d="M1 11h14M1 14h14" stroke="#888" strokeWidth="1.5" />
    </svg>
  );
}

function Sheets() {
  const rows = [
    ['pl-[38px]', 'gg墙柱平法施工图（含...'],
    ['pl-[3px]', 'gg剪力墙柱详图'],
    ['pl-0.5', '平面'],
    ['pl-[38px]', '负一层平面图'],
    ['pl-[38px]', '一层平面图'],
  ];
  return (
    <section className="flex flex-col h-[254px] shrink-0 bg-white border border-[#c2c6ca]">
      <PanelCap />
      <Tabs off="构件列表" on="图纸管理" />
      <div className="flex items-center h-[35px] shrink-0 pl-[7px] bg-[#eee] border-b border-[#ccc] text-[15px] text-[#444]">
        {[['addFile', '添加图纸', 1], ['splitSheet', '分割', 1], ['locate', '定位'], ['removeSheet', '删除']].map(([icon, t, c]) => (
          <button key={t} className="flex items-center gap-1 mr-[9px] whitespace-nowrap">
            <Icon name={icon} />
            {t}
            {c && <Caret className="ml-0.5" />}
          </button>
        ))}
      </div>
      <div className="flex h-[157px] shrink-0 overflow-hidden">
        <div className="w-[325px] overflow-hidden">
          <table className="w-[358px] table-fixed border-collapse text-[15px] whitespace-nowrap text-[#222]">
            <thead>
              <tr className="h-[31px] bg-[#eee] text-[#555]">
                <th className="w-[214px] bg-[#80b9f9] text-white">名称</th>
                <th className="w-[45px] p-0 font-normal border-r border-[#ccc]">锁定</th>
                <th className="p-0 pl-[7px] font-normal text-left">对应楼层</th>
              </tr>
            </thead>
            <tbody>
              {rows.map(([pad, t], i) => (
                <tr key={t} className={`h-[26px] border-y border-[#d5d5d5] ${i === 3 ? 'bg-[#d5e8fd]' : ''}`}>
                  <td className={`p-0 border-r border-[#ccc] ${i === 3 ? 'outline-2 -outline-offset-2 outline-[#7c8590]' : ''}`}>
                    <span className={`flex items-center leading-[25px] ${pad}`}>
                      {t === '平面' && (
                        <span className="w-4 h-4 mr-2 border border-[#888] rounded-[3px] text-center leading-3 text-[14px]">-</span>
                      )}
                      {t}
                    </span>
                  </td>
                  <td className="p-0 border-r border-[#ccc]"><PadLock /></td>
                  <td />
                </tr>
              ))}
            </tbody>
          </table>
        </div>
        <div className="w-2.5 h-[21px] mt-[87px] ml-1 rounded-full bg-[#c9c9c9]" />
      </div>
      <div className="w-[192px] h-2.5 ml-[18px] mt-1 rounded-full bg-[#c9c9c9]" />
    </section>
  );
}

function Layers() {
  return (
    <section className="flex flex-col flex-1 mt-1.5 bg-white border border-[#c2c6ca]">
      <PanelCap />
      <Tabs off="属性列表" on="图层管理" />
      <div className="flex items-center gap-2.5 h-[35px] pl-1.5 bg-[#eee] border-b border-[#ccc] text-[15px] text-[#555]">
        <button>显示指定图层</button>
        <button>隐藏指定图层</button>
      </div>
      <div className="bg-linear-to-b from-[#eee] from-[26px] to-white to-[26px]">
        <table className="w-[298px] table-fixed border-collapse text-[15px] text-[#222]">
          <thead>
            <tr className="h-[26px] bg-[#eee] text-[#555]">
              <th className="w-16 p-0 font-normal border-r border-b border-[#ccc]">开 / 关</th>
              <th className="w-[45px] p-0 font-normal border-r border-b border-[#ccc]">颜色</th>
              <th className="p-0 font-normal border-r border-b border-[#ccc]">名称</th>
            </tr>
          </thead>
          <tbody>
            {['已提取的 CAD 图层', 'CAD 原始图层'].map((t) => (
              <tr key={t} className="h-[26px] bg-white">
                <td className="p-0 border-r border-b border-[#ccc] text-center">
                  <label className="grid w-[18px] h-[18px] mx-auto">
                    <input type="checkbox" defaultChecked aria-label={t} className="col-start-1 row-start-1 appearance-none w-[18px] h-[18px] rounded-[2px] bg-[#4f9ff5]" />
                    <svg viewBox="0 0 18 18" className="col-start-1 row-start-1 pointer-events-none" fill="none" stroke="#fff" strokeWidth="2.5">
                      <path d="M4 9l4 4 7-8" />
                    </svg>
                  </label>
                </td>
                <td className="p-0 border-r border-b border-[#ccc]">
                  <svg viewBox="0 0 8 10" className="w-2 h-2.5 mx-auto" fill="none" stroke="#888">
                    <path d="M1 1l6 4-6 4z" />
                  </svg>
                </td>
                <td className="py-0 pl-[5px] border-r border-b border-[#ccc] leading-6">{t}</td>
              </tr>
            ))}
          </tbody>
        </table>
      </div>
    </section>
  );
}

/* ---------- drawing canvas ---------- */

const green = '#00d200';
const cyan = '#00b4b4';
const lime = '#b9cf5c';
const white = '#c4c4c4';
const red = '#c80000';
const yellow = '#c8c800';
const tan = '#d39a63';

const axes = 'M707 207V992M1110 207V992M1512 207V992M507 298H1920M507 877H1889';

// colour, path
const linework = [
  // left dimension chains
  [green, 'M548 287V992M507 298H607M540 877H607M542 293l13 12M542 871l13 12'],
  ['#006e00', 'M582 298V992M570 287l24 23M570 865l24 23'],
  // room walls
  [white, 'M733 868H1085M733 886H1085M1198 868H1336V886H1198M1101 902V969M1118 902V969M1699 295V371M1719 295V371'],
  [white, 'M1538 868H1585M1538 886H1575M1677 868H1764V886H1677M1889 868H1864V886H1889M1720 801V868'],
  [white, 'M1504 868V782H1699V868M1523 868V799H1699M1504 868H1538'],
  ['#888888', 'M1674 770l24 26M1674 788l24 24M1685 782V799'],
  // wall thickness dimensions
  [green, 'M866 261V310M859 273H909M859 294H909M859 298H909M860 267l12 12M860 288l12 12M860 292l12 12'],
  [green, 'M682 622V687M703 622V687M707 622V687M670 679H719M677 685l11-12M698 685l11-12M702 685l11-12'],
  [green, 'M946 856V898M887 868H954M887 877H954M887 886H954M940 862l12 12M940 871l12 12M940 880l12 12'],
  [green, 'M1289 856V898M1230 868H1297M1230 877H1297M1230 886H1297M1283 862l12 12M1283 871l12 12M1283 880l12 12'],
  [green, 'M1737 856V898M1678 868H1745M1678 877H1745M1678 886H1745M1731 862l12 12M1731 871l12 12M1731 880l12 12'],
  [green, 'M1656 359V400M1648 372H1747M1648 389H1747M1650 366l12 12M1650 383l12 12'],
  [green, 'M1661 565V611M1653 577H1738M1653 594H1738M1655 571l12 12M1655 588l12 12'],
  [green, 'M1658 770V812M1650 782H1691M1650 799H1691M1652 776l12 12M1652 793l12 12'],
  [green, 'M1030 865V992M1022 877H1076M1022 969H1076M1024 871l12 12M1024 963l12 12'],
  [green, 'M1324 784H1525M1336 776V844M1487 776V844M1512 776V844M1330 790l12-12M1481 790l12-12M1506 790l12-12'],
  [green, 'M1500 975H1905M1512 919V982M1764 919V982M1864 919V982M1758 981l12-12M1858 981l12-12M1506 981l12-12'],
  // hydrant leader and dimension
  [lime, 'M867 723H1116L1166 877M1136 868H1198M1098 944H1209M1110 894V952M1135 894V952M1198 894V952M1104 950l12-12M1129 950l12-12M1192 950l12-12'],
  [lime, 'M1920 503L1870 575M1857 594L1833 628'],
  [tan, 'M1463 712H1523L1567 809M1888 828L1920 810'],
  // door swings
  [cyan, 'M1336 877L1389 824M1487 877L1434 824M1574 877l36 35M1675 877l-36 35M1764 877l35 35M1864 877l-35 35M1087 992l23-22'],
];

// text, x, y, size, colour, vertical
const notes = [
  ['250', 843, 259, 28, white, 1],
  ['50', 843, 321, 28, white, 1],
  ['250', 646, 667, 28, white],
  ['50', 727, 667, 28, white],
  ['6900', 528, 602, 28, white, 1],
  ['6900', 519, 583, 20, '#fff', 1],
  ['400', 528, 985, 28, white, 1],
  ['400', 519, 972, 20, '#fff', 1],
  ['100', 933, 850, 28, white, 1],
  ['100', 933, 920, 28, white, 1],
  ['1100', 1009, 934, 28, white, 1],
  ['750', 1156, 922, 28, white],
  ['200', 1124, 967, 28, white],
  ['100', 1276, 850, 28, white, 1],
  ['100', 1276, 920, 28, white, 1],
  ['1800', 1399, 763, 28, white],
  ['300', 1471, 763, 28, white],
  ['200', 1634, 390, 28, white, 1],
  ['200', 1639, 595, 28, white, 1],
  ['200', 1637, 800, 28, white, 1],
  ['200', 1669, 790, 20, '#fff', 1],
  ['100', 1724, 850, 28, white, 1],
  ['100', 1724, 920, 28, white, 1],
  ['3000', 1625, 953, 28, white],
  ['1200', 1801, 953, 28, white],
  ['600', 1880, 957, 28, white],
  ['JFM2', 1412, 901, 28, cyan],
  ['JXM2', 1625, 850, 28, cyan],
  ['JXM2', 1814, 846, 28, cyan],
  ['库房', 1180, 604, 16, tan],
  ['电井', 1476, 691, 16, tan],
  ['水 暖井', 1783, 328, 16, tan],
];

const bubbles = [
  ['1', 707, 222], ['2', 1110, 222], ['3', 1512, 222], ['E', 521, 298],
  ['1', 707, 977], ['2', 1110, 977], ['3', 1512, 977], ['D', 521, 877], ['D', 1904, 877],
];

function Drawing() {
  return (
    <svg viewBox="506 207 1414 785" preserveAspectRatio="xMinYMin slice" className="block w-full h-full bg-black" role="img" aria-label="负一层平面图">
      <path d="M1905 491h15v40h-15zM1905 638h15v100h-15zM1905 902h15v90h-15z" fill="#fbfbfb" />
      <path d="M1904 491v41M1904 638v100M1904 902v90" stroke="#ffff00" />
      <path d="M1914 491v41M1914 638v100M1914 902v90" stroke="#ff2020" />
      <path d={axes} fill="none" stroke={red} strokeWidth="1.4" transform="translate(.5 .5)" />
      <g fill="#9a4c4c">
        <path d="M733 272h1187v23H733zM682 323h22v529h-22zM682 902h22v90h-22z" />
        <path d="M1699 371h221v18h-200v188h184v-45h16v106h-16v-44h-184v188h184v-44h16v113h-16v-51h-205z" />
      </g>
      <g fill="none" stroke={yellow} strokeWidth="1.4">
        <path d="M1760 411h129v152h-129zl129 152M1889 411l-129 152M1730 415h17v143h-17z" />
        <path d="M1760 608h129v151h-129zl129 151M1889 608l-129 151M1730 612h17v143h-17z" />
        <path d="M1585 868h92M1575 886h100M1764 868h100M1764 886h100" strokeDasharray="20 10" />
      </g>
      <g fill="none" strokeWidth="2">
        <path d="M1743 370H1911M1743 576H1879M1743 781H1879" stroke="#d8d8d8" />
        <path d="M1702 370h41M1720 576h23M1879 576h25M1720 781h23M1879 781h25M1905 531h15M1905 738h15" stroke="#7a00d8" />
      </g>
      <path d="M1136 886l62-18v18z" fill="#dcff78" />
      <path
        d="M682 272h51v52h-51zM1085 272h51v52h-51zM1487 272h51v52h-51zM682 851h51v51h-51zM1085 851h51v51h-51zM1487 851h51v51h-51zM1889 851h40v51h-40z"
        fill="#adadad"
        stroke="#d08868"
      />
      <g fill="none" strokeWidth="1.3" transform="translate(.5 .5)">
        {linework.map(([c, d]) => (
          <path key={d} d={d} stroke={c} />
        ))}
        <path d="M1136 877h62" stroke={red} />
      </g>
      {bubbles.map(([t, x, y]) => (
        <g key={t + x + y}>
          <path
            transform={`translate(${x} ${y})`}
            d="M-5-14H5L12-9 15 0 12 9 5 14H-5L-12 9-15 0-12-9z"
            fill="none"
            stroke="#007d00"
            strokeWidth="1.3"
          />
          <text x={x} y={y + 7} textAnchor="middle" className="fill-white text-[20px] font-['Noto_Sans_CJK_SC',sans-serif]">{t}</text>
        </g>
      ))}
      <g className="font-['Roboto_Condensed','Open_Sans_Condensed','Noto_Sans_CJK_SC',sans-serif] font-light">
        {notes.map(([t, x, y, size, c, vert]) => (
          <text
            key={t + x + y}
            fontSize={size}
            fill={c}
            textAnchor="middle"
            dy="0.36em"
            transform={`translate(${x} ${y})${vert ? ' rotate(-90)' : ''}`}
          >
            {t}
          </text>
        ))}
        <text x="866" y="711" fontSize="28" fill={lime}>
          <tspan fontSize="13">消火栓箱</tspan>
          750X1650
        </text>
        <text x="900" y="758" fontSize="28" fill={lime}>
          <tspan fontSize="13">箱底距地</tspan>
          150
        </text>
      </g>
      {/* coordinate gizmo */}
      <path d="M569 930V904" stroke="#00ff00" strokeWidth="5" />
      <path d="M569 893l6 14h-12z" fill="#00ff00" />
      <path d="M569 930h24" stroke="#ff0000" strokeWidth="5" />
      <path d="M606 930l-14 6v-12z" fill="#ff0000" />
      <circle cx="569" cy="930" r="7" fill="#0000c0" />
      <text x="569" y="890" textAnchor="middle" fontSize="18" fill="#00ff00">Y</text>
      <text x="614" y="937" textAnchor="middle" fontSize="18" fill="#ff0000">X</text>
      {/* zoom slider */}
      <rect x="1911" y="553" width="16" height="61" rx="6" fill="#b07c7c" stroke="#444" strokeWidth="2" />
      <path d="M1914 593h6v18h-6z" fill="#5ee000" />
    </svg>
  );
}

const cube = (fill) => (
  <path d="M1 8h22v21H1zM1 8l6-6h22l-6 6zM23 8l6-6v20l-6 7z" fill={fill} stroke="#3b4a5c" strokeWidth="1.4" />
);

function ViewBar() {
  return (
    <div className="absolute right-0 top-0 flex flex-col items-center w-[41px] h-[284px] pt-[13px] pr-1 rounded-l-sm bg-[#95989d] border border-[#b8babd]">
      <button aria-label="动态观察">
        <svg viewBox="0 0 30 30" className="w-[30px] h-[30px] mb-[5px]">
          <circle cx="15" cy="15" r="12" fill="#8fa3bd" stroke="#4b5867" />
          <circle cx="12" cy="10" r="6" fill="#dfe8f2" opacity=".7" />
          <path d="M2 22Q14 22 26 9M2 22q-2-4 2-5" fill="none" stroke="#3b4a5c" strokeWidth="2" />
          <circle cx="24" cy="9" r="5" fill="#b7c7da" stroke="#4b5867" />
        </svg>
      </button>
      <button aria-label="三维">
        <svg viewBox="0 0 30 30" className="w-[30px] h-[30px] mb-[7px]">
          {cube('#8399b5')}
          <text x="15" y="26" textAnchor="middle" fontSize="10" fill="#2c3846">3D</text>
        </svg>
      </button>
      <button aria-label="线框" className="flex flex-col items-center">
        <svg viewBox="0 0 30 30" className="w-[30px] h-[30px] mb-[7px]">
          {cube('#d3e7fd')}
          <path d="M7 2v20h22M7 22l-6 7" fill="none" stroke="#3b4a5c" />
        </svg>
        <Caret className="mb-[7px]" />
      </button>
      <button aria-label="实体" className="flex flex-col items-center">
        <svg viewBox="0 0 30 30" className="w-[30px] h-[30px] mb-[7px]">{cube('#8399b5')}</svg>
        <Caret className="mb-[7px]" />
      </button>
      <button aria-label="旋转视图" className="flex flex-col items-center">
        <svg viewBox="0 0 30 30" className="w-[30px] h-[30px] mb-[7px]" fill="none" stroke="#3b4a5c" strokeWidth="2.5">
          <path d="M26 20A12 12 0 1 1 24 7M28 3v7h-8" />
        </svg>
        <Caret />
      </button>
      <span className="w-7 border-t border-[#666] mt-[7px] mb-[5px]" />
      <button aria-label="显示设置">
        <svg viewBox="0 0 30 30" className="w-[30px] h-[30px]">
          <path d="M1 5l3-3h22l3 3v24H1zM1 5h28" fill="#8399b5" stroke="#3b4a5c" strokeWidth="1.4" />
          <path d="M4 9l2 2 3-3M18 9l2 2 3-3M5 14h3v2H5zM5 19h3v2H5zM5 24h3v2H5zM19 14h3v2h-3zM19 19h3v2h-3zM19 24h3v2h-3zM10 15h3M10 20h3M10 25h3M24 15h2M24 20h2M24 25h2M15 11v15" fill="none" stroke="#2c3846" />
        </svg>
      </button>
    </div>
  );
}

/* ---------- status bar ---------- */

function StatusButton({ className = 'bg-[#cdcdcf] border-[#b0b0b0]', label, children }) {
  return (
    <button aria-label={label} className={`flex items-center justify-center gap-1.5 h-[31px] shrink-0 border text-[15px] whitespace-nowrap ${className}`}>
      {children}
    </button>
  );
}

function StatusBar() {
  return (
    <footer className="flex items-center h-[38px] pl-[3px] pr-4 shrink-0 bg-[#dddde0] border-b-2 border-white text-[15px] text-[#444] whitespace-nowrap">
      <span className="w-[328px]">X = 2133 Y = 18977</span>
      <span className="w-[104px]">层高:&nbsp;&nbsp; 4.3</span>
      <span className="w-[167px]">标高:&nbsp;&nbsp; -4.4~-0.1</span>
      <span className="w-[128px]">1(6)</span>
      <span className="w-[129px]">隐藏:&nbsp; 0</span>
      <div className="flex gap-[5px] mr-2">
        <StatusButton label="正交">
          <svg viewBox="0 0 20 20" className="w-5 h-5 mx-1" fill="none" stroke="#555" strokeWidth="1.5"><path d="M3 1v17h16M3 12h6v6" /></svg>
        </StatusButton>
        <StatusButton label="对象捕捉" className="bg-white border-[#4a9af5] w-[45px]">
          <svg viewBox="0 0 20 20" className="w-5 h-5" fill="none"><path d="M3 3h15v16H3z" stroke={B} strokeWidth="1.5" /><path d="M0 0h6v6H0z" fill={S} stroke={O} /></svg>
          <Caret />
        </StatusButton>
        <StatusButton label="交点" className="ml-0.5 bg-[#d0d0d2] border-[#bbb]">
          <svg viewBox="0 0 20 20" className="w-5 h-5 mx-1" fill="none" stroke="#888" strokeWidth="1.3"><path d="M1 1l18 18M19 1L1 19" /></svg>
        </StatusButton>
        <StatusButton label="角度" className="ml-0.5 bg-[#cdcdcf] border-[#b0b0b0] w-[45px]">
          <svg viewBox="0 0 20 20" className="w-5 h-5" fill="none" stroke="#444" strokeWidth="1.5"><path d="M16 2L2 17h17M8 8l4 4" /></svg>
          <Caret />
        </StatusButton>
        <StatusButton label="动态输入" className="bg-[#cdcdcf] border-[#b0b0b0] w-[45px]">
          <svg viewBox="0 0 20 20" className="w-5 h-5" fill="none" stroke="#444" strokeWidth="1.5"><path d="M1 5h8M5 1v8" /><path d="M7 12h12v6H7z" fill="#444" /></svg>
          <Caret />
        </StatusButton>
        <StatusButton className="bg-[#cdcdcf] border-[#b0b0b0] w-[90px]">跨图层选择</StatusButton>
        <StatusButton className="bg-[#cdcdcf] border-[#b0b0b0] w-[75px]">折线选择</StatusButton>
      </div>
      <span>按鼠标左键指定第一个角点，或拾取构件图元</span>
      <span className="ml-auto">333.333 FPS</span>
    </footer>
  );
}

/* ---------- taskbar ---------- */

// name, drawing on a 30x30 grid, running, active
const apps = [
  ['开始', <path d="M6 8l8-1v8H6zM15 7l9-1v9h-9zM6 16h8v8l-8-1zM15 16h9v9l-9-1z" fill="#fff" />],
  ['搜索', <path d="M13 18L6 25M12 12a6 6 0 1 0 12 0a6 6 0 1 0-12 0z" fill="none" stroke="#fff" strokeWidth="1.6" />],
  ['Cortana', <circle cx="15" cy="15" r="8" fill="none" stroke="#fff" strokeWidth="2.5" />],
  ['任务视图', <path d="M6 6v3h12V6M6 12h12v7H6zM6 25v-3h12v3M23 5v3M23 11v14" fill="none" stroke="#fff" strokeWidth="1.5" />],
  ['彩块', (
    <g>
      <path d="M8 4h4v4H8z" fill="#0a0" /><path d="M13 4h4v4h-4zM8 9h4v4H8z" fill="#f00" /><path d="M18 4h4v4h-4z" fill="#900" />
      <path d="M8 14h4v4H8z" fill="#00f" /><path d="M13 14h4v4h-4z" fill="#90c" /><path d="M18 14h4v4h-4z" fill="#ee0" />
      <path d="M8 19h4v4H8z" fill="#066" /><path d="M8 24h4v4H8z" fill="#f00" /><path d="M13 24h4v4h-4z" fill="#0cf" /><path d="M18 24h4v4h-4z" fill="#0a4" />
    </g>
  )],
  ['邮件', (
    <g>
      <path d="M0 11L15 1l15 10v17H0z" fill="#0f5ca8" /><path d="M3 10h24L15 22z" fill="#f4f4f4" />
      <path d="M0 11l15 11L30 11v17H0z" fill="#28a8ea" /><path d="M30 11v17H8z" fill="#3fbdf0" />
    </g>
  )],
  ['Edge', (
    <g>
      <path d="M0 15C0-4 30-4 30 13c0 6-6 7-11 5 4-6-4-12-11-8-5 3-5 14 3 19C4 28 0 22 0 15" fill="#1b9de2" />
      <path d="M3 8C10-4 30-1 30 13c0 6-6 7-11 5 4-6-3-14-16-10" fill="#43d37b" />
      <path d="M8 14c-3 10 8 17 18 9-3 6-9 7-13 6C5 27 2 16 8 14" fill="#0c59a4" />
    </g>
  )],
  ['文件资源管理器', (
    <g>
      <path d="M1 4h11l3 3h14v20H1z" fill="#f8c146" /><path d="M1 4h11v3H1z" fill="#e09a1a" />
      <path d="M1 11h28v16H1z" fill="#ffdc73" /><path d="M6 27V16h18v11h-5v-6h-8v6z" fill="#3f97dc" />
    </g>
  ), 1],
  ['应用商店', (
    <g>
      <path d="M10 9V5c0-5 10-5 10 0v4" fill="none" stroke="#ccc" strokeWidth="1.5" /><path d="M1 8h28v20H1z" fill="#fff" />
      <path d="M9 12h5v5H9z" fill="#f25022" /><path d="M16 12h5v5h-5z" fill="#7fba00" /><path d="M9 19h5v5H9z" fill="#00a4ef" /><path d="M16 19h5v5h-5z" fill="#ffb900" />
    </g>
  )],
  ['CAD快速看图', (
    <g>
      <rect x="1" y="1" width="28" height="28" rx="3" fill="#1664b4" stroke="#aab" strokeWidth="2" />
      <text x="15" y="20" textAnchor="middle" fontSize="12" fill="#fff">CAD</text>
    </g>
  ), 1],
  ['文档', (
    <g>
      <rect width="30" height="30" rx="4" fill="#1a9bf0" /><path d="M5 4h18v12l-6 10H5z" fill="#fff" />
      <path d="M9 9h10M9 13h10M9 17h5" stroke="#1a9bf0" strokeWidth="1.8" /><circle cx="21" cy="20" r="4.5" fill="#fff" stroke="#1a9bf0" strokeWidth="2" />
      <path d="M18 24l-1 4M24 24l1 4" stroke="#fff" strokeWidth="2" />
    </g>
  ), 1],
  ['腾讯视频', (
    <g>
      <path d="M3 1q14 3 26 14Q17 26 3 29 0 15 3 1" fill="#1f9ef5" /><path d="M3 1q11 4 20 14Q14 25 5 28 0 15 3 1" fill="#7bd32b" />
      <path d="M2 11l10 9-8 8z" fill="#ff9a1e" /><path d="M9 9l11 6-11 6z" fill="#fff" />
    </g>
  ), 1],
  ['广联达', (
    <g>
      <rect width="30" height="30" rx="5" fill="#2e86ea" /><path d="M0 10h30M0 20h30M10 0v30M20 0v30" stroke="#5ba2f0" strokeWidth=".7" />
      <path d="M6 6h18v5h-6l1 14h-8l1-14H6z" fill="#fff" />
    </g>
  ), 1, 1],
  ['头像', (
    <g>
      <circle cx="15" cy="15" r="15" fill="#2a2024" /><path d="M2 8Q8-1 17 3q3 9 3 17l-4 9Q3 29 1 15z" fill="#e8d2cc" />
      <path d="M8 24q3-3 7-1-2 5-6 4" fill="#b8453f" /><path d="M4 12l4-1M12 11l4 1M10 13l-1 5" fill="none" stroke="#433" strokeWidth="1.2" />
    </g>
  ), 1],
];

function Tray({ children, label, className = '' }) {
  return (
    <button aria-label={label} className={`shrink-0 ${className}`}>
      <svg viewBox="0 0 20 20" className="w-5 h-5" fill="none" stroke="#fff" strokeWidth="1.4">{children}</svg>
    </button>
  );
}

function Taskbar() {
  return (
    <div className="flex items-stretch h-[50px] shrink-0 bg-[#242424] text-white">
      <div className="flex">
        {apps.map(([name, art, running, active], i) => (
          <button key={name} aria-label={name} className={`flex flex-col items-center pt-2.5 justify-between ${i < 4 ? 'w-[60px]' : 'w-[62px] px-[5px]'} ${active ? 'bg-[#555150]' : ''}`}>
            <svg viewBox="0 0 30 30" className="w-[30px] h-[30px]">{art}</svg>
            {running ? <span className="w-full h-[3px] bg-[#c9b9b9]" /> : null}
          </button>
        ))}
      </div>
      <div className="flex items-center gap-3 ml-auto pr-[5px]">
        <Tray label="人脉" className="mr-3"><path d="M10 5a3 3 0 1 0 6 0a3 3 0 1 0-6 0M8 14q1-6 6-5 4 0 5 5M3 11a3 3 0 1 0 6 0a3 3 0 1 0-6 0M1 19q1-6 5-5 4 0 5 5" /></Tray>
        <Tray label="更多"><path d="M3 14l7-8 7 8" strokeWidth="1.8" /></Tray>
        <Tray label="QQ">
          <g stroke="none"><path d="M10 0q6 0 6 8l2 7q-2 5-8 5t-8-5l2-7q0-8 6-8" fill="#111" /><path d="M6 9h8v8H6z" fill="#fff" /><path d="M4 8h12v3H4zM3 10h4v8H4z" fill="#e02020" /><path d="M10 11h9v8h-9z" fill="#f5b52a" /><circle cx="8" cy="4" r="1.5" fill="#fff" /><circle cx="12" cy="4" r="1.5" fill="#fff" /></g>
        </Tray>
        <Tray label="电源"><path d="M5 6h13v9H5zM19 9v3M1 2v4h4V2M3 6v4" /><path d="M6 7h11v7H6z" fill="#fff" /></Tray>
        <Tray label="音量"><path d="M1 7h3l4-4v14l-4-4H1zM11 7q2 3 0 6M14 5q3 5 0 10" /><path d="M17 3q4 7 0 14" stroke="#888" /></Tray>
        <Tray label="网络"><path d="M14 18q0-2 3-3M10 18q1-6 7-7M6 18Q7 8 17 7M2 18Q3 4 17 3" /></Tray>
        <Tray label="手写笔"><path d="M5 19L16 3q3-1 2 3L9 16q-6 5-6 0t10-3q5-1 5-4" /></Tray>
        <span className="text-[20px]">中</span>
        <span className="flex items-center justify-center w-[19px] h-5 ml-1 bg-white text-[#222] text-[16px] leading-5">拼</span>
        <time className="flex flex-col items-center w-24 text-[15px] leading-[23px]">
          <span>23:25</span>
          <span>2020/4/20</span>
        </time>
        <Tray label="通知" className="mr-1"><path d="M1 1h17v14h-8l-3 4v-4H1z" fill="#fff" /><path d="M4 5h11M4 8h11M4 11h6" stroke="#242424" /><path d="M15 10q-2 5 4 6-2 3-6 2-4-4 2-8" fill="#fff" stroke="#242424" /></Tray>
        <span className="w-px h-full ml-2 bg-[#666]" />
      </div>
    </div>
  );
}

export default function App() {
  return (
    <div className="flex flex-col h-screen overflow-hidden bg-white font-['Open_Sans','Noto_Sans_CJK_SC',sans-serif] text-[#222]">
      <TitleBar />
      <Ribbon />
      <ComboBar />
      <main className="flex flex-1 min-h-0">
        <NavTree />
        <div className="flex flex-col w-[346px] ml-[5px] shrink-0">
          <Sheets />
          <Layers />
        </div>
        <div className="flex items-center w-1 shrink-0">
          <span className="w-full h-[125px] bg-[#5a6670]" />
        </div>
        <div className="relative flex-1 min-w-0 overflow-hidden">
          <Drawing />
          <ViewBar />
        </div>
      </main>
      <StatusBar />
      <Taskbar />
    </div>
  );
}
